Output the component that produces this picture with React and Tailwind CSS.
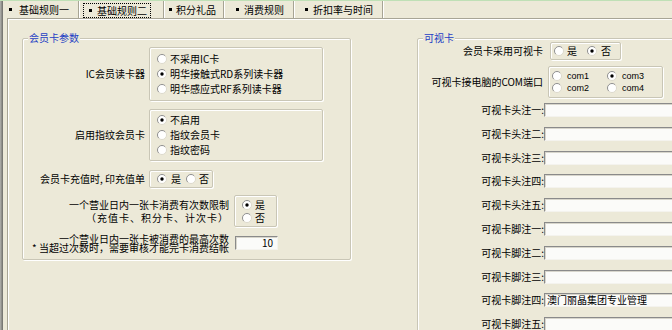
import React from 'react'

// 会员卡参数 / 可视卡 settings page (XP-style tab pane)

const Radio = ({ on }) => (
    <svg width="10" height="10" viewBox="0 0 10 10" className="shrink-0">
        <circle cx="5" cy="5" r="4.5" fill="#fff" />
        <path d="M1.8 8.2A4.5 4.5 0 0 1 8.2 1.8" fill="none" stroke="#8f8f8f" strokeWidth="1" />
        <path d="M8.2 1.8A4.5 4.5 0 0 1 1.8 8.2" fill="none" stroke="#dcd9cc" strokeWidth="1" />
        {on && <circle cx="5" cy="5" r="1.7" fill="#000" />}
    </svg>
)

const Opt = ({ on, label, gap = 'gap-[3px]' }) => (
    <div className={`flex items-center ${gap} h-[15px]`}>
        <Radio on={on} />
        <span className="whitespace-nowrap">{label}</span>
    </div>
)

const Sep = () => <div className="w-[2px] h-[17px] border-l border-[#A7A494] border-r border-r-white" />

const Bullet = () => <span className="w-[3px] h-[3px] bg-black shrink-0" />

const boxCls = 'border border-[#C9C6B6] rounded-[2px] shadow-[inset_1px_1px_0_#fff,1px_1px_0_#fff]'

const Input = ({ value, cls = '' }) => (
    <div className={`h-[14px] bg-[#FBFBF9] border-t border-l border-[#8a8a8a] border-b border-r border-b-[#f4f3ee] border-r-[#f4f3ee] shadow-[inset_1px_1px_0_#d8d6cc] leading-[12px] px-[2px] whitespace-nowrap ${cls}`}>
        {value}
    </div>
)

const cardRows = [
    { l: '可视卡头注一:' }, { l: '可视卡头注二:' }, { l: '可视卡头注三:' }, { l: '可视卡头注四:' }, { l: '可视卡头注五:' },
    { l: '可视卡脚注一:' }, { l: '可视卡脚注二:' }, { l: '可视卡脚注三:' },
    { l: '可视卡脚注四:', v: '澳门丽晶集团专业管理' }, { l: '可视卡脚注五:' },
]

export default function App() {
    return (
        <div className="w-[672px] h-[330px] overflow-hidden bg-[#ECE9D8] flex flex-col text-[10px] leading-[12px] text-black font-['Noto_Sans_CJK_SC','Noto_Sans_CJK_JP',sans-serif]">
            <div className="h-px bg-[#BFE0B6] shrink-0" />
            <div className="flex flex-1 min-h-0">
                <div className="w-[3px] shrink-0 bg-gradient-to-r from-[#b4b4b0] to-[#6e6e6a]" />

                <div className="flex flex-col flex-1 min-w-0">
                    {/* tabs */}
                    <div className="h-[17px] flex items-center shrink-0">
                        <div className="w-[75px] flex items-center gap-[7px] pl-[6px]"><Bullet />基础规则一</div>
                        <Sep />
                        <div className="w-[83px] h-[17px] flex items-end pl-[3px]">
                            <div className="h-[15px] w-[68px] flex items-center gap-[5px] pl-[5px] border border-dotted border-black">
                                <Bullet />基础规则二
                            </div>
                        </div>
                        <Sep />
                        <div className="w-[58px] flex items-center gap-[4px] pl-[4px]"><Bullet />积分礼品</div>
                        <Sep />
                        <div className="w-[68px] flex items-center gap-[5px] pl-[11px]"><Bullet />消费规则</div>
                        <Sep />
                        <div className="w-[87px] flex items-center gap-[5px] pl-[10px]"><Bullet />折扣率与时间</div>
                        <Sep />
                    </div>

                    {/* page */}
                    <div className="flex-1 ml-[4px] border-l border-t border-[#A8A596] shadow-[inset_1px_1px_0_#fff] pt-[19px] pl-[14px] flex gap-[66px]">

                        {/* 会员卡参数 */}
                        <div className={`relative w-[329px] h-[222px] shrink-0 ${boxCls} pt-[8px] flex flex-col`}>
                            <span className="absolute left-[5px] top-[-7px] px-px bg-[#ECE9D8] text-[#1F3FC4]">会员卡参数</span>

                            <div className="flex items-center">
                                <div className="w-[122px] shrink-0 text-right">IC会员读卡器</div>
                                <div className={`ml-[4px] w-[174px] h-[54px] ${boxCls} flex flex-col justify-center pl-[7px]`}>
                                    <Opt label="不采用IC卡" />
                                    <Opt on label="明华接触式RD系列读卡器" />
                                    <Opt label="明华感应式RF系列读卡器" />
                                </div>
                            </div>

                            <div className="flex items-center mt-[8px]">
                                <div className="w-[122px] shrink-0 text-right">启用指纹会员卡</div>
                                <div className={`ml-[4px] w-[174px] h-[52px] ${boxCls} flex flex-col justify-center pl-[7px]`}>
                                    <Opt on label="不启用" />
                                    <Opt label="指纹会员卡" />
                                    <Opt label="指纹密码" />
                                </div>
                            </div>

                            <div className="flex items-center mt-[9px]">
                                <div className="w-[122px] shrink-0 text-right whitespace-nowrap">会员卡充值时, 印充值单</div>
                                <div className={`ml-[4px] w-[64px] h-[18px] ${boxCls} flex items-center gap-[5px] pl-[7px]`}>
                                    <Opt on label="是" gap="gap-[4px]" />
                                    <Opt label="否" gap="gap-[3px]" />
                                </div>
                            </div>

                            <div className="flex items-center mt-[7px]">
                                <div className="w-[206px] shrink-0 text-right whitespace-nowrap leading-[13px]">
                                    <div>一个营业日内一张卡消费有次数限制</div>
                                    <div className="tracking-[1px]">（充值卡、积分卡、计次卡）</div>
                                </div>
                                <div className={`ml-[5px] w-[43px] h-[32px] ${boxCls} flex flex-col justify-center pl-[7px]`}>
                                    <div className="flex items-center gap-[3px] h-[13px]"><Radio on />是</div>
                                    <div className="flex items-center gap-[3px] h-[13px]"><Radio />否</div>
                                </div>
                            </div>

                            <div className="flex items-center mt-[7px]">
                                <div className="w-[206px] shrink-0 text-right whitespace-nowrap leading-[9px]">
                                    <div>一个营业日内一张卡被消费的最高次数</div>
                                    <div>* 当超过次数时，需要审核才能完卡消费结帐</div>
                                </div>
                                <Input value="10" cls="ml-[6px] w-[43px] text-right pr-[4px]" />
                            </div>
                        </div>

                        {/* 可视卡 */}
                        <div className={`relative w-[300px] h-[320px] shrink-0 ${boxCls} pt-[3px] flex flex-col`}>
                            <span className="absolute left-[5px] top-[-7px] px-px bg-[#ECE9D8] text-[#1F3FC4]">可视卡</span>

                            <div className="flex items-center">
                                <div className="w-[125px] shrink-0 text-right">会员卡采用可视卡</div>
                                <div className={`ml-[7px] w-[71px] h-[18px] ${boxCls} flex items-center gap-[10px] pl-[3px]`}>
                                    <Opt label="是" />
                                    <Opt on label="否" gap="gap-[4px]" />
                                </div>
                            </div>

                            <div className="flex items-center mt-[6px]">
                                <div className="w-[125px] shrink-0 text-right">可视卡接电脑的COM端口</div>
                                <div className={`ml-[5px] w-[115px] h-[32px] ${boxCls} grid grid-cols-[55px_55px] content-center pl-[3px] text-[9px] font-['Liberation_Sans',sans-serif]`}>
                                    <div className="flex items-center gap-[5px] h-[12px]"><Radio />com1</div>
                                    <div className="flex items-center gap-[5px] h-[12px]"><Radio on />com3</div>
                                    <div className="flex items-center gap-[5px] h-[12px]"><Radio />com2</div>
                                    <div className="flex items-center gap-[5px] h-[12px]"><Radio />com4</div>
                                </div>
                            </div>

                            <div className="flex flex-col gap-[9.8px] mt-[5px]">
                                {cardRows.map(r => (
                                    <div key={r.l} className="flex items-center">
                                        <div className="w-[126px] shrink-0 text-right whitespace-nowrap">{r.l}</div>
                                        <Input value={r.v} cls="w-[200px] shrink-0" />
                                    </div>
                                ))}
                            </div>
                        </div>
                    </div>
                </div>
            </div>
        </div>
    )
}
